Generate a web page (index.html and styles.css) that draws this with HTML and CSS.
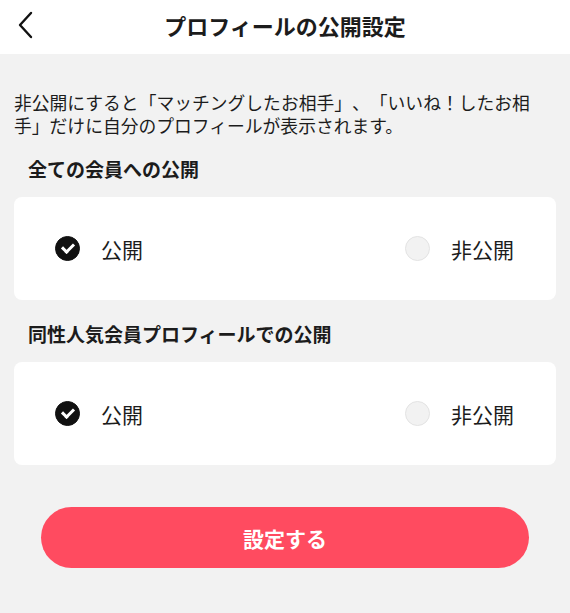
FILE: index.html
```html
<!DOCTYPE html>
<html>
<head>
    <meta charset="utf-8">
    <title>プロフィールの公開設定</title>
    <link rel="stylesheet" href="styles.css">
</head>
<body>
    <header class="topbar">
        <button class="back" aria-label="戻る">
            <svg width="20" height="28" viewBox="0 0 20 28">
                <path d="M15 2 L4 14 L15 26" fill="none" stroke="#111" stroke-width="2.4" stroke-linecap="round" stroke-linejoin="round"/>
            </svg>
        </button>
        <h1 class="title">プロフィールの公開設定</h1>
    </header>

    <main class="content">
        <p class="note">非公開にすると「マッチングしたお相手」、「いいね！したお相手」だけに自分のプロフィールが表示されます。</p>

        <h2 class="section-title">全ての会員への公開</h2>
        <div class="card">
            <label class="option">
                <span class="radio checked"></span>
                <span class="option-label">公開</span>
            </label>
            <label class="option">
                <span class="radio"></span>
                <span class="option-label">非公開</span>
            </label>
        </div>

        <h2 class="section-title second">同性人気会員プロフィールでの公開</h2>
        <div class="card">
            <label class="option">
                <span class="radio checked"></span>
                <span class="option-label">公開</span>
            </label>
            <label class="option">
                <span class="radio"></span>
                <span class="option-label">非公開</span>
            </label>
        </div>

        <div class="actions">
            <button class="submit">設定する</button>
        </div>
    </main>
</body>
</html>
```

FILE: styles.css
```css
body {
    font-family: "Noto Sans CJK JP", "Noto Sans", sans-serif;
    margin: 0;
    padding: 0;
    background-color: #f2f2f2;
    color: #1c1c1c;
}

.topbar {
    position: relative;
    height: 54px;
    background-color: #ffffff;
    display: flex;
    align-items: center;
    justify-content: center;
}

.back {
    position: absolute;
    left: 16px;
    top: 11px;
    padding: 0;
    border: none;
    background: none;
    cursor: pointer;
}

.back svg {
    display: block;
}

.title {
    margin: 0 0 5px;
    font-size: 22px;
    font-weight: bold;
    line-height: 30px;
}

.content {
    padding: 0 14px 40px;
}

.note {
    margin: 37px 0 0;
    font-size: 17.8px;
    line-height: 23px;
    text-spacing-trim: space-all;
}

.section-title {
    margin: 19px 0 0 14px;
    font-size: 19px;
    font-weight: bold;
    line-height: 26px;
}

.section-title.second {
    margin-top: 21px;
}

.card {
    margin-top: 15px;
    height: 103px;
    background-color: #ffffff;
    border-radius: 8px;
    display: flex;
    align-items: center;
    justify-content: space-between;
    padding: 0 42px 0 41px;
}

.option {
    display: flex;
    align-items: center;
    gap: 21px;
    cursor: pointer;
}

.option-label {
    font-size: 21px;
    line-height: 28px;
}

.radio {
    width: 25px;
    height: 25px;
    border-radius: 50%;
    box-sizing: border-box;
    background-color: #f2f2f2;
    border: 1px solid #e3e3e3;
    position: relative;
}

.radio.checked {
    background-color: #111111;
    border-color: #111111;
}

.radio.checked::after {
    content: "";
    position: absolute;
    left: 6px;
    top: 6px;
    width: 9px;
    height: 5px;
    border-left: 3px solid #ffffff;
    border-bottom: 3px solid #ffffff;
    transform: rotate(-45deg);
}

.actions {
    margin-top: 42px;
    padding: 0 27px;
}

.submit {
    width: 100%;
    height: 61px;
    border: none;
    border-radius: 31px;
    background-color: #ff4b60;
    color: #ffffff;
    font-family: inherit;
    font-size: 21px;
    font-weight: bold;
    cursor: pointer;
}
```
